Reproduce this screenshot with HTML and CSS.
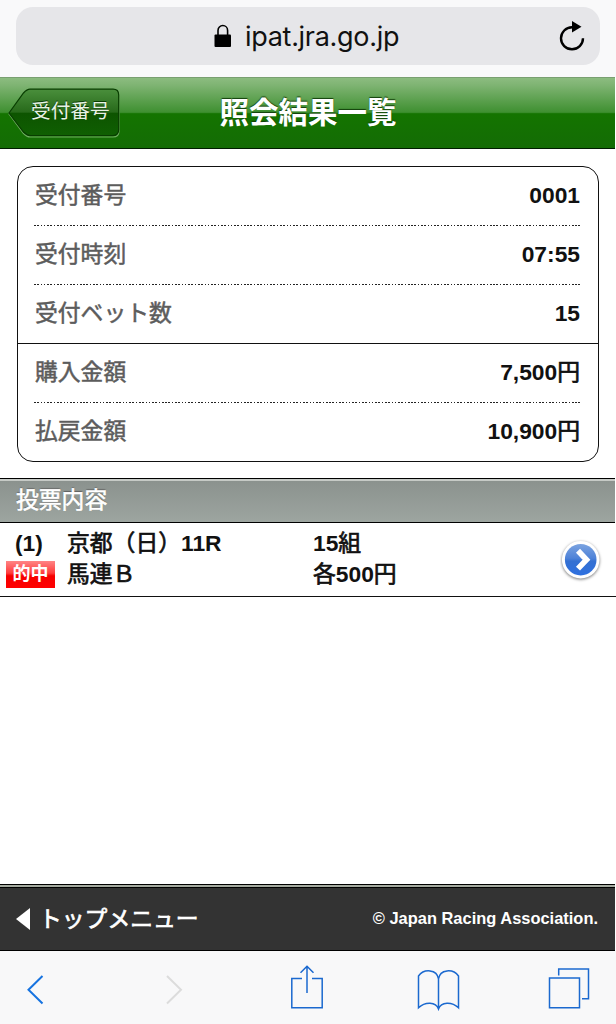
FILE: index.html
```
<!DOCTYPE html>
<html lang="ja">
<head>
    <meta charset="UTF-8">
    <meta name="viewport" content="width=device-width, initial-scale=1.0">
    <title>照会結果一覧</title>
    <link rel="stylesheet" href="styles.css">
</head>
<body>

    <div class="browser-bar">
        <div class="address">
            <svg class="lock" width="18" height="24" viewBox="0 0 18 24">
                <path d="M4 12V6.500a4.800 5 0 0 1 9.600 0V12" fill="none" stroke="#000" stroke-width="1.600"/>
                <rect x="0.500" y="10.500" width="16.500" height="12.500" rx="1"/>
            </svg>
            <span class="url">ipat.jra.go.jp</span>
            <svg class="reload" width="28" height="32" viewBox="0 0 28 32">
                <path d="M14 7.300A11 11 0 1 0 25 18.300" fill="none" stroke="#000" stroke-width="2.400"/>
                <path d="M14 1L23.500 6.700L14 12.500Z"/>
            </svg>
        </div>
    </div>

    <div class="header">
        <a class="back-btn">
            <svg class="back-shape" width="112" height="50" viewBox="0 0 112 50">
                <defs>
                    <linearGradient id="backFill" x1="0" y1="0" x2="0" y2="1">
                        <stop offset="0" stop-color="#4a8f3c"/>
                        <stop offset="0.500" stop-color="#27691a"/>
                        <stop offset="0.510" stop-color="#0d5400"/>
                        <stop offset="1" stop-color="#0f5f02"/>
                    </linearGradient>
                </defs>
                <path d="M1 26L15.500 6Q19 2.500 22 2.500H105Q111 2.500 111 8.500V43Q111 49 105 49H22Q19 49 15.500 45.500Z" fill="none" stroke="#6fac60" stroke-width="1.200"/>
                <path d="M1 25L15.500 5Q19 1.200 22 1.200H105Q110.700 1.200 110.700 7V41.500Q110.700 47.500 105 47.500H22Q19 47.500 15.500 44Z" fill="url(#backFill)" stroke="#083d00" stroke-width="1.200"/>
            </svg>
            <span class="back-text">受付番号</span>
        </a>
        <h1>照会結果一覧</h1>
    </div>

    <div class="summary">
        <div class="row"><span class="label">受付番号</span><span class="value">0001</span></div>
        <div class="row"><span class="label">受付時刻</span><span class="value">07:55</span></div>
        <div class="row last"><span class="label">受付ベット数</span><span class="value">15</span></div>
        <div class="row money"><span class="label">購入金額</span><span class="value">7,500<span class="kanji">円</span></span></div>
        <div class="row last"><span class="label">払戻金額</span><span class="value">10,900<span class="kanji">円</span></span></div>
    </div>

    <h2>投票内容</h2>

    <div class="bet">
        <div class="bet-no">
            <span class="num">(1)</span>
            <span class="hit">的中</span>
        </div>
        <div class="bet-race">
            <div><span class="kanji">京都（日）</span>11R</div>
            <div><span class="kanji">馬連Ｂ</span></div>
        </div>
        <div class="bet-amount">
            <div>15<span class="kanji">組</span></div>
            <div><span class="kanji">各</span>500<span class="kanji">円</span></div>
        </div>
        <svg class="arrow" width="44" height="46" viewBox="0 0 44 46">
            <defs>
                <linearGradient id="arrowFill" x1="0" y1="0" x2="0" y2="1">
                    <stop offset="0" stop-color="#7ba3e0"/>
                    <stop offset="0.450" stop-color="#4f83d8"/>
                    <stop offset="0.550" stop-color="#3470d2"/>
                    <stop offset="1" stop-color="#2e70e0"/>
                </linearGradient>
            </defs>
            <circle class="arrow-ring" cx="20.700" cy="21.700" r="18.800" fill="#fff"/>
            <circle cx="20.700" cy="21.700" r="15.800" fill="url(#arrowFill)"/>
            <path d="M18 12.800L26.500 21.700L18 30.600" fill="none" stroke="#fff" stroke-width="5.600"/>
        </svg>
    </div>

    <div class="footer">
        <a class="top-menu">
            <svg width="14" height="22" viewBox="0 0 14 22"><path d="M0 11L14 0V22Z" fill="#fff"/></svg>
            <span>トップメニュー</span>
        </a>
        <span class="copyright">© Japan Racing Association.</span>
    </div>

    <div class="toolbar">
        <svg width="18" height="48" viewBox="0 0 18 48">
            <path d="M16.500 12L2.500 25.700L16.500 39.500" fill="none" stroke="#1673e0" stroke-width="2"/>
        </svg>
        <svg width="18" height="48" viewBox="0 0 18 48">
            <path d="M2 12L16 25.700L2 39.500" fill="none" stroke="#dcdcdc" stroke-width="2"/>
        </svg>
        <svg width="34" height="48" viewBox="0 0 34 48">
            <path d="M12 14.500H1.800V43.800H32.200V14.500H22M17 29V3M10.500 8.800L17 2.300L23.500 8.800" fill="none" stroke="#1b69cf" stroke-width="1.500"/>
        </svg>
        <svg width="44" height="48" viewBox="0 0 44 48">
            <path d="M21.500 15C20 5 7 4.500 1.500 12V43.800C8 37.500 19 37.500 21.500 45C24 37.500 35 37.500 41.500 43.800V12C36 4.500 23 5 21.500 15V45" fill="none" stroke="#1b69cf" stroke-width="1.500"/>
        </svg>
        <svg width="42" height="48" viewBox="0 0 42 48">
            <path d="M1.500 14H31.500V43.800H1.500ZM10.700 11.500V5H40.500V34.700H34" fill="none" stroke="#1b69cf" stroke-width="1.500"/>
        </svg>
    </div>

</body>
</html>
```

FILE: styles.css
```
* {
    box-sizing: border-box;
}
body {
    display: flex;
    flex-direction: column;
    height: 1024px;
    margin: 0;
    background-color: #fff;
    color: #111;
    font-family: "Liberation Sans", "Noto Sans CJK JP", sans-serif;
}
.browser-bar {
    height: 77px;
    padding: 7px 16px 0;
    background-color: #f9f9fa;
}
.address {
    display: flex;
    align-items: center;
    height: 58px;
    padding: 0 14px 0 198px;
    border-radius: 17px;
    background-color: #e6e6e9;
}
.url {
    margin: 0 auto 0 13px;
    font-family: Inter, sans-serif;
    font-size: 27px;
    letter-spacing: -0.3px;
    color: #111;
}
.header {
    display: grid;
    grid-template-columns: 112px 1fr 119px;
    align-items: center;
    height: 72px;
    margin-right: 1px;
    padding-left: 8px;
    border-top: 1px solid #79a071;
    border-bottom: 1px solid #001c00;
    background: linear-gradient(#8cbc80, #7fb473 10%, #3f9031 49%, #147400 51%, #146c05);
}
.back-btn {
    display: grid;
    height: 50px;
}
.back-shape,
.back-text {
    grid-area: 1 / 1;
}
.back-text {
    padding-left: 23px;
    font-size: 19.7px;
    line-height: 46px;
    color: #e9f3e7;
    text-shadow: 0 -1px 0 #0a3d02;
}
h1 {
    margin: 0;
    font-size: 29.5px;
    line-height: 68px;
    text-align: center;
    color: #fff;
    text-shadow: 0 -1px 1px #123f0a;
}
.summary {
    height: 296px;
    margin: 17px 17px 0;
    border: 1.5px solid #111;
    border-radius: 16px;
}
.row {
    display: flex;
    justify-content: space-between;
    height: 59px;
    padding: 0 18px 0 17px;
    font-size: 22.8px;
    line-height: 57px;
    background: repeating-linear-gradient(90deg, #222 0 1.6px, transparent 1.6px 3.28px) 16px 58px / calc(100% - 33px) 1.4px no-repeat;
}
.row.last {
    background: none;
}
.row.money {
    margin-top: -1px;
    height: 60px;
    border-top: 1.5px solid #111;
}
.label {
    color: #5c5c5c;
    -webkit-text-stroke: 0.5px #5c5c5c;
}
.value {
    font-weight: bold;
}
.kanji {
    font-weight: normal;
    -webkit-text-stroke: 0.7px #111;
}
h2 {
    height: 45px;
    margin: 16px 1px 0 0;
    padding-left: 16px;
    border: solid #000;
    border-width: 1px 0;
    box-shadow: inset 0 2px 0 #c6cac6;
    background: linear-gradient(#8a918d, #9da5a0);
    font-size: 22.8px;
    font-weight: normal;
    line-height: 43px;
    color: #fff;
    -webkit-text-stroke: 0.6px #fff;
    text-shadow: 0 -1px 1px #555;
}
.bet {
    display: grid;
    grid-template-columns: 61px 246px 247px 44px;
    height: 74px;
    padding: 5px 0 0 6px;
    border-bottom: 1px solid #111;
    font-size: 22.8px;
    font-weight: bold;
    line-height: 31px;
}
.num {
    display: block;
    padding-left: 9px;
}
.hit {
    display: block;
    width: 49px;
    height: 27px;
    margin-top: 2px;
    background: linear-gradient(#ff8585, #ff3c3c 45%, #f60000 55%, #ff0000);
    font-size: 18px;
    line-height: 26px;
    text-align: center;
    color: #fff;
}
.arrow {
    margin-top: 10px;
}
.arrow-ring {
    filter: drop-shadow(0 1px 1.5px #777);
}
.footer {
    display: flex;
    align-items: center;
    justify-content: space-between;
    height: 67px;
    margin: auto 1px 0 0;
    padding: 3px 17px 1px 16px;
    border: solid #000;
    border-width: 1px 0;
    background: linear-gradient(#a5aaa0 0 2px, #000 2px 3px, #333 3px);
    color: #fff;
}
.top-menu {
    display: flex;
    align-items: center;
    gap: 9px;
    font-size: 22.8px;
    line-height: 58px;
    -webkit-text-stroke: 0.7px #fff;
}
.copyright {
    font-size: 16.45px;
    font-weight: bold;
}
.toolbar {
    display: grid;
    grid-template-columns: 139px 125px 127px 131px 42px;
    height: 73px;
    padding: 13px 0 0 26px;
    background-color: #f8f8f9;
}
```
